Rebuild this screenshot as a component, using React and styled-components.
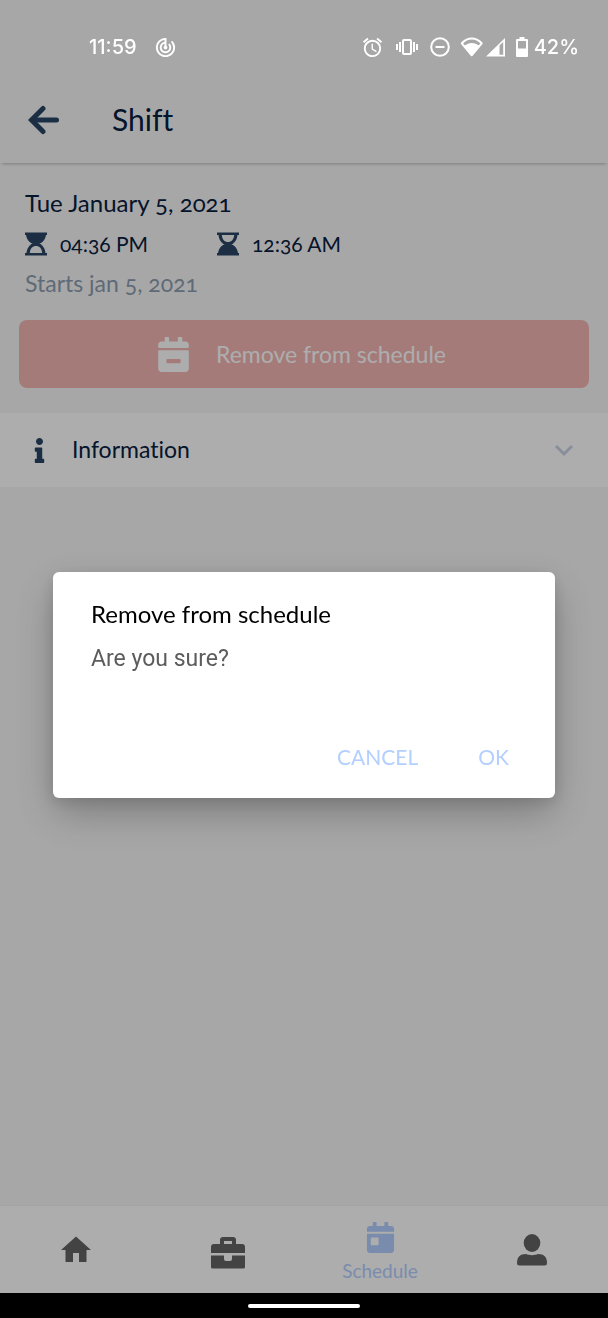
import React from "react";
import styled, { createGlobalStyle } from "styled-components";
import { FaCalendarMinus, FaCalendarDay, FaInfo } from "react-icons/fa";
import { MdHome, MdAlarm, MdTrackChanges } from "react-icons/md";

const GlobalStyle = createGlobalStyle`
  *, *::before, *::after { box-sizing: border-box; }
  body { margin: 0; background: #f7f7f7; }
  body, button { font-family: Lato, "Open Sans", sans-serif; font-variant-ligatures: none; }
  h1, h2, p { margin: 0; font-weight: 400; }
  button { border: 0; padding: 0; background: none; color: inherit; cursor: pointer; }
  svg { display: block; flex: none; }
`;

const Screen = styled.div`
  display: flex;
  flex-direction: column;
  min-height: 100vh;
  color: #08203f;
`;

const StatusBar = styled.div`
  position: relative;
  z-index: 2;
  display: flex;
  align-items: center;
  justify-content: space-between;
  height: 76px;
  padding: 18px 29px 0 89px;
  color: #fff;
  font: 500 20px/24px Inter, sans-serif;
`;

const StatusGroup = styled.div`
  display: flex;
  align-items: center;
  gap: ${(p) => p.$gap}px;
`;

const Header = styled.header`
  display: flex;
  align-items: center;
  gap: 52px;
  height: 87px;
  margin-bottom: 1px;
  padding: 0 28px;
  box-shadow: 0 3px 3px -2px rgba(0, 0, 0, 0.25);
`;

const BackButton = styled.button`
  color: #294464;
`;

const PageTitle = styled.h1`
  padding-bottom: 2px;
  font-size: 30px;
  line-height: 40px;
`;

const Summary = styled.section`
  display: flex;
  flex-direction: column;
  padding: 19px 19px 25px;
`;

const DateText = styled.p`
  padding: 0 6px;
  font-size: 24px;
  line-height: 40px;
  font-variant-numeric: oldstyle-nums;
`;

const Times = styled.div`
  display: flex;
  padding: 0 6px;
`;

const Time = styled.div`
  display: flex;
  align-items: center;
  gap: 13px;
  width: 192px;
  font-size: 21px;
  line-height: 42px;
  font-variant-numeric: oldstyle-nums;

  svg { color: #294464; }
`;

const StartText = styled.p`
  padding: 0 6px;
  margin-bottom: 19px;
  color: #8d9db0;
  font-size: 23px;
  line-height: 36px;
  font-variant-numeric: oldstyle-nums;
`;

const RemoveButton = styled.button`
  display: flex;
  align-items: center;
  justify-content: center;
  gap: 25px;
  height: 68px;
  padding-right: 6px;
  border-radius: 8px;
  background: #f3b5b4;
  color: #fff;
  font-size: 23px;
`;

const InfoRow = styled.button`
  display: flex;
  align-items: center;
  width: 100%;
  height: 74px;
  padding: 0 34px 0 29px;
  background: #fff;
  font-size: 23px;
  text-align: left;
`;

const InfoIcon = styled.span`
  display: flex;
  justify-content: center;
  width: 20px;
  margin-right: 23px;
  color: #294464;
`;

const InfoLabel = styled.span`
  flex: 1;
  padding-bottom: 2px;
`;

const Tabs = styled.nav`
  display: grid;
  grid-template-columns: repeat(4, 1fr);
  height: 88px;
  margin-top: auto;
  border-top: 1px solid #f2f2f2;
  background: #fff;
`;

const Tab = styled.button`
  display: flex;
  flex-direction: column;
  align-items: center;
  justify-content: center;
  gap: 6px;
  padding-top: ${(p) => (p.$active ? 6 : 0)}px;
  color: ${(p) => (p.$active ? "#b3cfff" : "#646464")};
  font-size: 19px;
  line-height: 24px;
`;

const GestureBar = styled.div`
  display: flex;
  align-items: center;
  justify-content: center;
  height: 25px;
  background: #000;
  position: relative;
  z-index: 2;

  &::after {
    content: "";
    width: 112px;
    height: 4px;
    border-radius: 2px;
    background: #fff;
  }
`;

const Scrim = styled.div`
  position: fixed;
  inset: 0;
  z-index: 1;
  display: flex;
  align-items: center;
  justify-content: center;
  padding: 76px 53px 25px;
  background: rgba(0, 0, 0, 0.32);
`;

const Dialog = styled.div`
  display: flex;
  flex-direction: column;
  width: 100%;
  min-height: 226px;
  padding: 24px 38px 21px;
  border-radius: 6px;
  background: #fff;
  box-shadow: 0 16px 40px rgba(0, 0, 0, 0.25), 0 4px 14px rgba(0, 0, 0, 0.12);
`;

const DialogTitle = styled.h2`
  color: #000;
  font-size: 24px;
  line-height: 36px;
`;

const DialogText = styled.p`
  margin-top: 11px;
  color: #5c5c5c;
  font: 400 23px/32px Roboto, sans-serif;
`;

const DialogActions = styled.div`
  display: flex;
  justify-content: flex-end;
  gap: 60px;
  margin-top: auto;
  padding-right: 8px;
`;

const DialogButton = styled.button`
  color: #b3cfff;
  font-size: 21px;
  line-height: 40px;
`;

const VibrateIcon = () => (
  <svg width="22" height="18" viewBox="0 0 22 18" fill="none" stroke="currentColor" strokeWidth="2">
    <rect x="7" y="2" width="8" height="14" rx="1" />
    <path d="M4 4v10M1 6v6M18 4v10M21 6v6" />
  </svg>
);

const DisturbIcon = () => (
  <svg width="20" height="20" viewBox="0 0 20 20" fill="none" stroke="currentColor" strokeWidth="2">
    <circle cx="10" cy="10" r="8.8" />
    <path d="M5.5 10h9" />
  </svg>
);

const SignalIcons = () => (
  <svg width="46" height="20" viewBox="0 0 46 20">
    <path d="M1.800 6.300C8 0 15.500 0 21.700 6.300L11.700 18.300Z" fill="none" stroke="currentColor" strokeWidth="2" strokeLinejoin="round" />
    <path d="M4 9C9 5 14.500 5 19.500 9L11.700 18.500Z" fill="currentColor" />
    <path d="M45 1V19.500H26Z" fill="currentColor" />
    <path d="M39.500 8.500L43.200 5V17.700H39.500Z" fill="#a8a8a8" />
  </svg>
);

const BatteryIcon = () => (
  <svg width="12" height="20" viewBox="0 0 12 20">
    <path fillRule="evenodd" fill="currentColor" d="M3.500 0h5v2H11a1 1 0 0 1 1 1v16a1 1 0 0 1-1 1H1a1 1 0 0 1-1-1V3a1 1 0 0 1 1-1h2.500ZM2 4v7.500h8V4Z" />
  </svg>
);

const BackIcon = () => (
  <svg width="32" height="30" viewBox="0 0 32 30" fill="none" stroke="currentColor" strokeWidth="5" strokeLinecap="round" strokeLinejoin="round">
    <path d="M15 3.500L3.500 15L15 26.500" strokeLinejoin="miter" />
    <path d="M5 15H28.500" />
  </svg>
);

const Hourglass = ({ flipped }) => (
  <svg width="22" height="24" viewBox="0 0 22 24">
    <g fill="currentColor" transform={flipped ? "rotate(180 11 12)" : undefined}>
      <path d="M0 0.500H22V3H0ZM0 21H22V23.500H0Z" />
      <path d="M1 2H21C21 7 17.500 11 13.500 12H8.500C4.500 11 1 7 1 2Z" />
      <path fillRule="evenodd" d="M8.500 11H13.500C18 13 20.500 17 20.500 22H1.500C1.500 17 4 13 8.500 11ZM4.800 21H17.200C16.800 16.500 14.500 14 11 14S5.200 16.500 4.800 21Z" />
    </g>
  </svg>
);

const ChevronIcon = () => (
  <svg width="20" height="14" viewBox="0 0 20 14" fill="none" stroke="#c8d2e4" strokeWidth="3">
    <path d="M2 3L10 11L18 3" />
  </svg>
);

const BriefcaseIcon = () => (
  <svg width="34" height="38" viewBox="0 -6 34 38" fill="currentColor">
    <path fillRule="evenodd" d="M9 7V3a3 3 0 0 1 3-3H22a3 3 0 0 1 3 3V7H31a3 3 0 0 1 3 3V16H0V10a3 3 0 0 1 3-3ZM13 4V7H21V4Z" />
    <path d="M0 18.500H13V22a2 2 0 0 0 2 2H19a2 2 0 0 0 2-2V18.500H34V30a1.500 1.500 0 0 1-1.500 1.500H1.500A1.500 1.500 0 0 1 0 30Z" />
  </svg>
);

const PersonIcon = () => (
  <svg width="30" height="32" viewBox="0 0 30 32" fill="currentColor">
    <ellipse cx="15" cy="9" rx="8.300" ry="9" />
    <path d="M9 20C12 21.500 18 21.500 21 20C27 20 30 23 30 29Q30 31.500 27.500 31.500H2.500Q0 31.500 0 29C0 23 3 20 9 20Z" />
  </svg>
);

export default function App() {
  return (
    <>
      <GlobalStyle />
      <Screen>
        <StatusBar>
          <StatusGroup $gap={17}>
            <span>11:59</span>
            <MdTrackChanges size={23} />
          </StatusGroup>
          <StatusGroup $gap={12}>
            <MdAlarm size={23} />
            <VibrateIcon />
            <StatusGroup $gap={10}>
              <DisturbIcon />
              <SignalIcons />
              <StatusGroup $gap={6}>
                <BatteryIcon />
                <span>42%</span>
              </StatusGroup>
            </StatusGroup>
          </StatusGroup>
        </StatusBar>
        <Header>
          <BackButton aria-label="Back"><BackIcon /></BackButton>
          <PageTitle>Shift</PageTitle>
        </Header>
        <main>
          <Summary>
            <DateText>Tue January 5, 2021</DateText>
            <Times>
              <Time><Hourglass />04:36 PM</Time>
              <Time><Hourglass flipped />12:36 AM</Time>
            </Times>
            <StartText>Starts jan 5, 2021</StartText>
            <RemoveButton>
              <FaCalendarMinus size={35} />
              Remove from schedule
            </RemoveButton>
          </Summary>
          <InfoRow aria-expanded="false">
            <InfoIcon><FaInfo size={25} /></InfoIcon>
            <InfoLabel>Information</InfoLabel>
            <ChevronIcon />
          </InfoRow>
        </main>
        <Tabs>
          <Tab aria-label="Home"><MdHome size={36} /></Tab>
          <Tab aria-label="Jobs"><BriefcaseIcon /></Tab>
          <Tab $active aria-current="page">
            <FaCalendarDay size={31} />
            Schedule
          </Tab>
          <Tab aria-label="Profile"><PersonIcon /></Tab>
        </Tabs>
        <GestureBar />
      </Screen>
      <Scrim>
        <Dialog role="dialog" aria-modal="true" aria-labelledby="dialog-title">
          <DialogTitle id="dialog-title">Remove from schedule</DialogTitle>
          <DialogText>Are you sure?</DialogText>
          <DialogActions>
            <DialogButton>CANCEL</DialogButton>
            <DialogButton>OK</DialogButton>
          </DialogActions>
        </Dialog>
      </Scrim>
    </>
  );
}
